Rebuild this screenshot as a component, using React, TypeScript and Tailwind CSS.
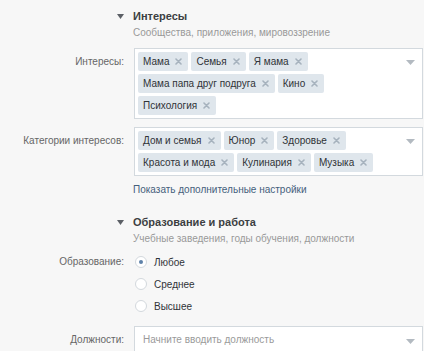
import React from "react";

const font = { fontFamily: '"Liberation Sans", Arial, sans-serif' };

const Tag: React.FC<{ label: string }> = ({ label }) => (
  <div className="flex items-center h-[19px] bg-[#dfe6ec] rounded-[2px] pl-[5px] pr-[6px] text-[#2f3337]">
    <span className="leading-[19px]">{label}</span>
    <svg className="ml-[6px]" width="7" height="7" viewBox="0 0 7 7">
      <path d="M1 1 L6 6 M6 1 L1 6" stroke="#a6b2bd" strokeWidth="1.6" strokeLinecap="round" />
    </svg>
  </div>
);

const Arrow = () => (
  <svg width="9" height="5" viewBox="0 0 9 5" className="absolute right-[7px] top-[11px]">
    <path d="M0 0 L9 0 L4.5 5 Z" fill="#b3bac1" />
  </svg>
);

const TagBox: React.FC<{ rows: string[][] }> = ({ rows }) => (
  <div className="relative bg-white border border-[#d3d9de] p-[3px] pr-[24px] flex flex-col gap-[3px]">
    {rows.map((row, i) => (
      <div key={i} className="flex gap-[3px]">
        {row.map((t) => (
          <Tag key={t} label={t} />
        ))}
      </div>
    ))}
    <Arrow />
  </div>
);

const SectionHeader: React.FC<{ title: string; sub: string; className?: string }> = ({ title, sub, className }) => (
  <div className={className}>
    <div className="flex items-center h-[16px]">
      <div className="w-[124px] flex justify-end">
        <svg width="7" height="5" viewBox="0 0 7 5">
          <path d="M0 0 L7 0 L3.5 5 Z" fill="#5c6066" />
        </svg>
      </div>
      <div className="ml-[9px] font-bold text-[11px] text-[#3c3f42]">{title}</div>
    </div>
    <div className="ml-[133px] mt-[2px] h-[14px] leading-[14px] text-[#999999]">{sub}</div>
  </div>
);

const Radio: React.FC<{ label: string; checked?: boolean }> = ({ label, checked }) => (
  <div className="flex items-center h-[22px]">
    <div className="w-[12px] h-[12px] rounded-full border border-[#d3d8dd] bg-white flex items-center justify-center ml-[1px]">
      {checked && <div className="w-[4px] h-[4px] rounded-full bg-[#5e81a8]" />}
    </div>
    <span className="ml-[7px] text-[#2f3337]">{label}</span>
  </div>
);

export default function App() {
  return (
    <div className="w-[424px] h-[351px] overflow-hidden bg-[#f7f7f7] text-[10px]" style={font}>
      <SectionHeader className="pt-[8px]" title="Интересы" sub="Сообщества, приложения, мировоззрение" />

      <div className="flex mt-[8px] pr-[1px]">
        <div className="w-[124px] text-right text-[#666666] pt-[7px] leading-[14px]">Интересы:</div>
        <div className="ml-[10px] flex-1">
          <TagBox
            rows={[
              ["Мама", "Семья", "Я мама"],
              ["Мама папа друг подруга", "Кино"],
              ["Психология"],
            ]}
          />
        </div>
      </div>

      <div className="flex mt-[8px] pr-[1px]">
        <div className="w-[124px] text-right text-[#666666] pt-[7px] leading-[14px]">Категории интересов:</div>
        <div className="ml-[10px] flex-1">
          <TagBox
            rows={[
              ["Дом и семья", "Юнор", "Здоровье"],
              ["Красота и мода", "Кулинария", "Музыка"],
            ]}
          />
        </div>
      </div>

      <div className="ml-[133px] mt-[7px] leading-[14px] text-[#45607c]">Показать дополнительные настройки</div>

      <SectionHeader
        className="mt-[17px]"
        title="Образование и работа"
        sub="Учебные заведения, годы обучения, должности"
      />

      <div className="flex mt-[5px]">
        <div className="w-[124px] text-right text-[#666666] leading-[22px]">Образование:</div>
        <div className="ml-[10px] flex flex-col">
          <Radio label="Любое" checked />
          <Radio label="Среднее" />
          <Radio label="Высшее" />
        </div>
      </div>

      <div className="flex mt-[9px] pr-[1px]">
        <div className="w-[124px] text-right text-[#666666] pt-[7px] leading-[14px]">Должности:</div>
        <div className="ml-[10px] flex-1 relative bg-white border border-[#d3d9de] h-[30px]">
          <div className="pl-[8px] pt-[6px] leading-[14px] text-[#9a9a9a]">Начните вводить должность</div>
          <svg width="9" height="5" viewBox="0 0 9 5" className="absolute right-[7px] top-[12px]">
            <path d="M0 0 L9 0 L4.5 5 Z" fill="#b3bac1" />
          </svg>
        </div>
      </div>
    </div>
  );
}
